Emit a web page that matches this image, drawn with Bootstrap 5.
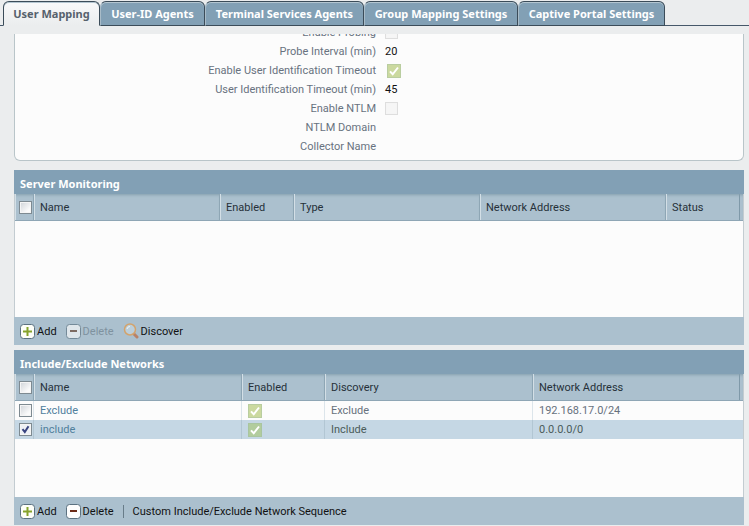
<!DOCTYPE html>
<html lang="en">
<head>
<meta charset="utf-8">
<meta name="viewport" content="width=device-width, initial-scale=1">
<title>User Mapping</title>
<link href="https://cdn.jsdelivr.net/npm/bootstrap@5.3.0/dist/css/bootstrap.min.css" rel="stylesheet">
<style>
body { background: #ebedee; color: #222; font-family: Roboto, "Liberation Sans", sans-serif; font-size: 11px; line-height: 19px; }
.tabs-bar { padding: 1px 0 0 3px; border-bottom: 1px solid #46586a; }
.tabs-bar .nav-link { height: 25px; margin: 0 0 -1px; padding: 2px 0 0; border: 1px solid #3b4c59; border-left-color: #a9bcc8; border-radius: 6px 6px 0 0; background: #82a0b5; box-shadow: inset 0 1px #b4c6d1; color: #fff; text-align: center; white-space: nowrap; }
.tabs-bar .nav-link, .grid-title { font-family: "Noto Sans", "Open Sans", sans-serif; font-size: 11px; font-weight: 700; line-height: 19px; }
.tabs-bar .nav-link.active { background: linear-gradient(#f8f9fa, #ebedee); border-color: #3b4c59; border-bottom-color: #ebedee; color: #56616c; }
.tab-xs { width: 97px; } .tab-s { width: 105px; } .tab-l { width: 159px; } .tab-m { width: 154px; } .tab-n { width: 147px; }
.page-body { padding: 8px 5px 0 14px; }
.setup { height: 127px; padding-bottom: 4px; background: #fcfcfc; border: 1px solid #b9c5c9; border-top: 0; border-radius: 0 0 6px 6px; }
.setup-row { flex: 0 0 19px; }
.setup-name { width: 361px; color: #68727f; text-align: right; }
.setup-value { margin-left: 9px; color: #111; }
.grid-title { margin: 0; padding: 4px 6px 1px; background: #82a0b5; color: #fff; }
.grid-area { height: 123px; background: #fcfcfc; border: solid #c3ccd1; border-width: 0 1px; }
.grid-table { table-layout: fixed; width: 100%; border-collapse: separate; border-spacing: 0; }
.grid-table th { height: 27px; padding: 0 0 0 6px; background: #abc0ce; border: solid #8ea6b5; border-width: 0 1px 1px 0; box-shadow: inset 1px 0 #d3dfe6, inset 0 3px 3px -2px #869fae; color: #263039; font-weight: 400; }
.grid-table td { height: 19px; padding: 0 0 0 6px; border-right: 1px solid #dce5eb; color: #67717d; line-height: 19px; }
.grid-table th:last-child, .grid-table td:last-child { border-right: 0; }
.grid-table th:last-child { box-shadow: inset 1px 0 #d3dfe6, inset 0 3px 3px -2px #869fae, inset -3px 0 #abc0ce, inset -4px 0 #7f99a9; }
.grid-table th:first-child, .grid-table td:first-child { padding: 0 0 0 4px; }
.grid-table .picked td { background: #c5d7e4; border-right-color: #b2c6d3; color: #4b5c5a; }
.grid-table a { color: #50809c; text-decoration: none; }
.c-19 { width: 19px; } .c-74 { width: 74px; } .c-83 { width: 83px; } .c-186 { width: 186px; } .c-208 { width: 208px; }
.tick { display: block; width: 13px; height: 13px; margin: 0; appearance: none; border: 1px solid #7e8a91; background: linear-gradient(135deg, #cfd3d8, #fbfbfb 75%); box-shadow: inset 0 0 0 1px #f5f5f5; }
.tick:checked { background: #eef1f5 url("data:image/svg+xml,%3Csvg xmlns='http://www.w3.org/2000/svg' viewBox='0 0 11 11'%3E%3Cpath d='M2.5 5.2 4.8 8 8.5 2.2' fill='none' stroke='%23394480' stroke-width='2'/%3E%3C/svg%3E"); }
.tick:disabled { border-color: #dedede; background: #f6f6f6; opacity: 1; }
.flag { display: block; width: 14px; height: 14px; margin: 0; appearance: none; border: 1px solid #b9cda0; background: #cbd99f url("data:image/svg+xml,%3Csvg xmlns='http://www.w3.org/2000/svg' viewBox='0 0 12 12'%3E%3Cpath d='M2 6.4 4.7 9.3 10 2.5' fill='none' stroke='white' stroke-width='2'/%3E%3C/svg%3E"); }
.setup-value .flag { margin-left: 2px; }
.picked .flag { border-color: #a9c59f; background-color: #b2cc9d; }
.grid-tools { height: 28px; padding-left: 6px; gap: 9px; background: #abc0ce; }
.tool { padding: 0; border: 0; background: none; color: #111; line-height: 19px; gap: 2px; }
.tool:disabled { color: #7f929f; }
.tool-sep { width: 1px; height: 13px; background: #687c89; }
.sec { margin-top: 9px; } .sec + .sec { margin-top: 5px; }
</style>
<script src="https://cdn.jsdelivr.net/npm/bootstrap@5.3.0/dist/js/bootstrap.bundle.min.js"></script>
</head>
<body>
<svg class="d-none" aria-hidden="true">
  <symbol id="i-add" viewBox="0 0 15 15"><rect x=".5" y=".5" width="14" height="14" rx="3" fill="#fdfef8" stroke="#5b7180"/><path d="M7.5 3v9M3 7.5h9" stroke="#86a32b" stroke-width="2"/></symbol>
  <symbol id="i-del" viewBox="0 0 15 15"><rect x=".5" y=".5" width="14" height="14" rx="3" fill="#fdfdfd" stroke="#5b7180"/><path d="M4 7h7" stroke="#6b2b17" stroke-width="2"/></symbol>
  <symbol id="i-del-off" viewBox="0 0 15 15"><rect x=".5" y=".5" width="14" height="14" rx="3" fill="#dfe6eb" stroke="#748a99"/><path d="M4 7h7" stroke="#7d6b62" stroke-width="2"/></symbol>
  <symbol id="i-find" viewBox="0 0 16 16"><path d="m10.5 10.5 3.5 3.5" stroke="#b98268" stroke-width="3" stroke-linecap="round"/><circle cx="7" cy="6.5" r="5.5" fill="#bccfdb" stroke="#d3a36c" stroke-width="1.5"/><path d="M4 6a3 3 0 0 1 3-2.5" fill="none" stroke="#eef5f9"/></symbol>
</svg>

<nav class="nav tabs-bar flex-nowrap">
  <a class="nav-link active tab-xs" aria-current="page" href="#">User Mapping</a>
  <a class="nav-link tab-s" href="#">User-ID Agents</a>
  <a class="nav-link tab-l" href="#">Terminal Services Agents</a>
  <a class="nav-link tab-m" href="#">Group Mapping Settings</a>
  <a class="nav-link tab-n" href="#">Captive Portal Settings</a>
</nav>

<main class="page-body">
  <section class="setup d-flex flex-column justify-content-end overflow-hidden">
    <div class="setup-row d-flex align-items-center"><label class="setup-name" for="probing">Enable Probing</label><div class="setup-value"><input class="tick" type="checkbox" id="probing" disabled></div></div>
    <div class="setup-row d-flex align-items-center"><span class="setup-name">Probe Interval (min)</span><span class="setup-value">20</span></div>
    <div class="setup-row d-flex align-items-center"><label class="setup-name" for="timeout">Enable User Identification Timeout</label><div class="setup-value"><input class="flag" type="checkbox" id="timeout" checked disabled></div></div>
    <div class="setup-row d-flex align-items-center"><span class="setup-name">User Identification Timeout (min)</span><span class="setup-value">45</span></div>
    <div class="setup-row d-flex align-items-center"><label class="setup-name" for="ntlm">Enable NTLM</label><div class="setup-value"><input class="tick" type="checkbox" id="ntlm" disabled></div></div>
    <div class="setup-row d-flex align-items-center"><span class="setup-name">NTLM Domain</span></div>
    <div class="setup-row d-flex align-items-center"><span class="setup-name">Collector Name</span></div>
  </section>

  <section class="sec">
    <h2 class="grid-title">Server Monitoring</h2>
    <div class="grid-area">
      <table class="grid-table">
        <colgroup><col class="c-19"><col class="c-186"><col class="c-74"><col class="c-186"><col class="c-186"><col></colgroup>
        <thead><tr><th><input class="tick" type="checkbox" aria-label="Select all servers"></th><th>Name</th><th>Enabled</th><th>Type</th><th>Network Address</th><th>Status</th></tr></thead>
      </table>
    </div>
    <div class="grid-tools d-flex align-items-center">
      <button class="tool d-flex align-items-center" type="button"><svg width="15" height="15"><use href="#i-add"/></svg>Add</button>
      <button class="tool d-flex align-items-center" type="button" disabled><svg width="15" height="15"><use href="#i-del-off"/></svg>Delete</button>
      <button class="tool d-flex align-items-center" type="button"><svg width="16" height="16"><use href="#i-find"/></svg>Discover</button>
    </div>
  </section>

  <section class="sec">
    <h2 class="grid-title">Include/Exclude Networks</h2>
    <div class="grid-area">
      <table class="grid-table">
        <colgroup><col class="c-19"><col class="c-208"><col class="c-83"><col class="c-208"><col></colgroup>
        <thead><tr><th><input class="tick" type="checkbox" aria-label="Select all networks"></th><th>Name</th><th>Enabled</th><th>Discovery</th><th>Network Address</th></tr></thead>
        <tbody>
          <tr><td><input class="tick" type="checkbox" aria-label="Select Exclude"></td><td><a href="#">Exclude</a></td><td><input class="flag" type="checkbox" aria-label="Exclude enabled" checked disabled></td><td>Exclude</td><td>192.168.17.0/24</td></tr>
          <tr class="picked"><td><input class="tick" type="checkbox" aria-label="Select include" checked></td><td><a href="#">include</a></td><td><input class="flag" type="checkbox" aria-label="include enabled" checked disabled></td><td>Include</td><td>0.0.0.0/0</td></tr>
        </tbody>
      </table>
    </div>
    <div class="grid-tools d-flex align-items-center">
      <button class="tool d-flex align-items-center" type="button"><svg width="15" height="15"><use href="#i-add"/></svg>Add</button>
      <button class="tool d-flex align-items-center" type="button"><svg width="15" height="15"><use href="#i-del"/></svg>Delete</button>
      <span class="tool-sep"></span>
      <button class="tool" type="button">Custom Include/Exclude Network Sequence</button>
    </div>
  </section>
</main>
</body>
</html>
